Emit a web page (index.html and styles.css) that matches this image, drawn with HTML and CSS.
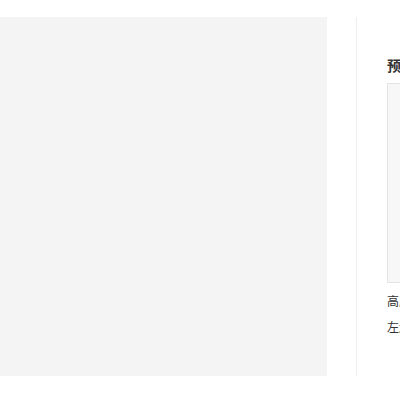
FILE: index.html
```html
<!DOCTYPE html>
<html lang="zh">
<head>
<meta charset="utf-8">
<link rel="stylesheet" href="styles.css">
</head>
<body>
<div class="page">
  <div class="canvas"></div>
  <aside class="panel">
    <h3 class="title">预览效果</h3>
    <div class="preview"></div>
    <p class="info">高度：200px</p>
    <p class="info">左边距：0px</p>
  </aside>
</div>
</body>
</html>
```
FILE: styles.css
```css
html, body {
  margin: 0;
  padding: 0;
  overflow: hidden;
  background: #fff;
  font-family: "Noto Sans CJK SC", "Noto Sans", sans-serif;
  color: #333;
}
.page {
  display: flex;
  padding-top: 17px;
  width: 700px;
}
.canvas {
  width: 327px;
  height: 359px;
  background: #f4f4f4;
  flex: none;
}
.panel {
  margin-left: 29px;
  border-left: 1px solid #eeeeee;
  padding: 38px 0 0 30px;
  width: 260px;
  height: 321px;
  flex: none;
}
.title {
  margin: 0;
  font-size: 14px;
  line-height: 20px;
  font-weight: bold;
  color: #333;
}
.preview {
  margin-top: 8px;
  height: 198px;
  border: 1px solid #e4e4e4;
  background: #f7f7f7;
}
.info {
  margin: 0;
  font-size: 12px;
  line-height: 26px;
  color: #333;
}
.preview + .info {
  margin-top: 5px;
}
```
